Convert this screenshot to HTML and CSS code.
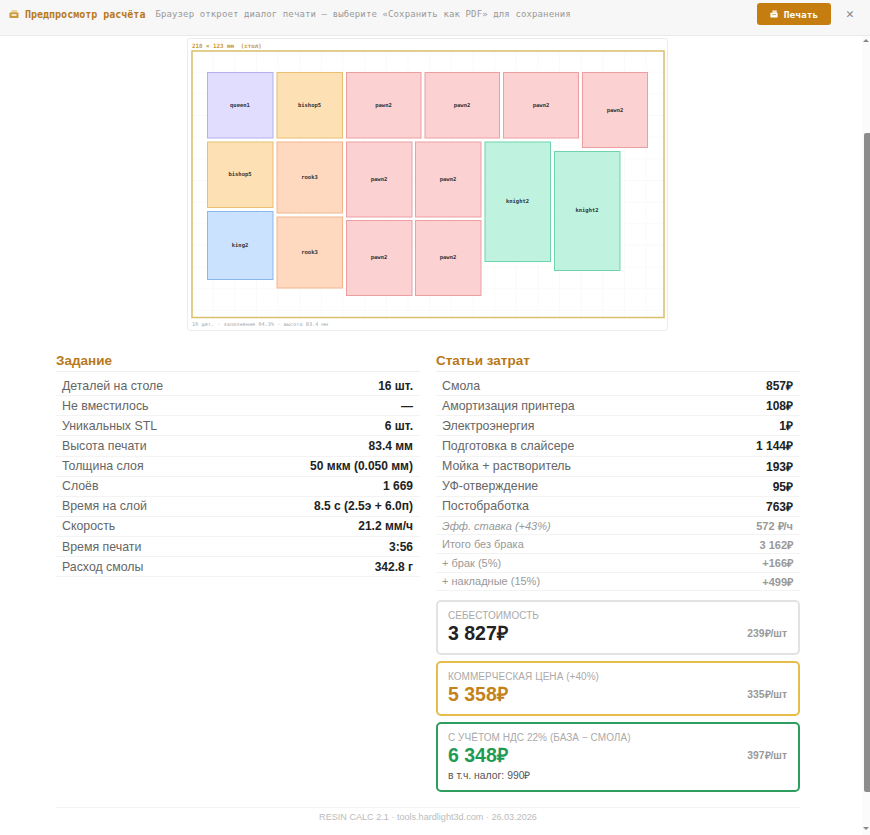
FILE: index.html
```html
<!DOCTYPE html>
<html lang="ru">
<head>
    <meta charset="UTF-8">
    <title>Предпросмотр расчёта</title>
    <link rel="stylesheet" href="styles.css">
</head>
<body>
    <div class="toolbar">
        <svg class="toolbar-icon" viewBox="0 0 10 10"><rect x="2.5" y="1" width="5.5" height="3" fill="#e8d3a0"/><rect x="0.5" y="3.5" width="9" height="5.5" fill="#c8993f"/><rect x="2.5" y="5" width="5" height="2" fill="#f3e4c2"/></svg>
        <span class="toolbar-title">Предпросмотр расчёта</span>
        <span class="toolbar-hint">Браузер откроет диалог печати — выберите «Сохранить как PDF» для сохранения</span>
        <button class="print-btn">
            <svg class="print-icon" viewBox="0 0 10 10"><rect x="3" y="0.5" width="5.5" height="3.5" fill="#f6e6cc"/><rect x="0.5" y="3.5" width="9" height="6" rx="0.5" fill="#ffffff"/><rect x="2.5" y="5" width="5" height="1.4" fill="#e0b070"/></svg>
            Печать
        </button>
        <span class="close-btn">✕</span>
    </div>

    <div class="viewport">
        <div class="page">
            <div class="sheet">
                <div class="sheet-cap">218 × 123 мм &nbsp;(стол)</div>
                <svg class="bed" viewBox="191 50 474 269">
                    <defs>
                        <pattern id="grid" x="192" y="51" width="21.65" height="21.65" patternUnits="userSpaceOnUse">
                            <path d="M21.65 0V21.65H0" fill="none" stroke="#f1f1ec" stroke-width="0.7"/>
                        </pattern>
                    </defs>
                    <rect class="bed-frame" x="192" y="51" width="472" height="266.5"/>
                    <g class="part part-queen"><rect x="207.5" y="72.5" width="65.5" height="65.5"/><text x="240" y="107">queen1</text></g>
                    <g class="part part-bishop"><rect x="277" y="72.5" width="65.5" height="65.5"/><text x="309.5" y="107">bishop5</text></g>
                    <g class="part part-pawn"><rect x="346.5" y="72.5" width="74.5" height="65.5"/><text x="383.5" y="107">pawn2</text></g>
                    <g class="part part-pawn"><rect x="425" y="72.5" width="74.5" height="65.5"/><text x="462" y="107">pawn2</text></g>
                    <g class="part part-pawn"><rect x="503.5" y="72.5" width="75" height="65.5"/><text x="541" y="107">pawn2</text></g>
                    <g class="part part-pawn"><rect x="582.5" y="72.5" width="65" height="75"/><text x="615" y="112">pawn2</text></g>
                    <g class="part part-bishop"><rect x="207.5" y="142" width="65.5" height="65.5"/><text x="240" y="176">bishop5</text></g>
                    <g class="part part-rook"><rect x="277" y="142" width="65.5" height="71"/><text x="309.5" y="179">rook3</text></g>
                    <g class="part part-pawn"><rect x="346.5" y="142" width="65.5" height="75"/><text x="379" y="181">pawn2</text></g>
                    <g class="part part-pawn"><rect x="415.5" y="142" width="65.5" height="75"/><text x="448" y="181">pawn2</text></g>
                    <g class="part part-knight"><rect x="485" y="142" width="65.5" height="119.5"/><text x="517.5" y="203">knight2</text></g>
                    <g class="part part-knight"><rect x="554.5" y="151.5" width="65.5" height="119"/><text x="587" y="212">knight2</text></g>
                    <g class="part part-king"><rect x="207.5" y="211.5" width="65.5" height="68"/><text x="240" y="247">king2</text></g>
                    <g class="part part-rook"><rect x="277" y="217" width="65.5" height="71"/><text x="309.5" y="254">rook3</text></g>
                    <g class="part part-pawn"><rect x="346.5" y="220.5" width="65.5" height="75"/><text x="379" y="259">pawn2</text></g>
                    <g class="part part-pawn"><rect x="415.5" y="220.5" width="65.5" height="75"/><text x="448" y="259">pawn2</text></g>
                </svg>
                <div class="sheet-foot">16 дет. · заполнение 64.3% · высота 83.4 мм</div>
            </div>

            <div class="columns">
                <section>
                    <h2>Задание</h2>
                    <div class="row"><span>Деталей на столе</span><b>16 шт.</b></div>
                    <div class="row"><span>Не вместилось</span><b>—</b></div>
                    <div class="row"><span>Уникальных STL</span><b>6 шт.</b></div>
                    <div class="row"><span>Высота печати</span><b>83.4 мм</b></div>
                    <div class="row"><span>Толщина слоя</span><b>50 мкм (0.050 мм)</b></div>
                    <div class="row"><span>Слоёв</span><b>1 669</b></div>
                    <div class="row"><span>Время на слой</span><b>8.5 с (2.5э + 6.0п)</b></div>
                    <div class="row"><span>Скорость</span><b>21.2 мм/ч</b></div>
                    <div class="row"><span>Время печати</span><b>3:56</b></div>
                    <div class="row"><span>Расход смолы</span><b>342.8 г</b></div>
                </section>
                <section>
                    <h2>Статьи затрат</h2>
                    <div class="row"><span>Смола</span><b>857₽</b></div>
                    <div class="row"><span>Амортизация принтера</span><b>108₽</b></div>
                    <div class="row"><span>Электроэнергия</span><b>1₽</b></div>
                    <div class="row"><span>Подготовка в слайсере</span><b>1 144₽</b></div>
                    <div class="row"><span>Мойка + растворитель</span><b>193₽</b></div>
                    <div class="row"><span>УФ-отверждение</span><b>95₽</b></div>
                    <div class="row"><span>Постобработка</span><b>763₽</b></div>
                    <div class="row row-sub row-rate"><span>Эфф. ставка (+43%)</span><b>572 ₽/ч</b></div>
                    <div class="row row-sub"><span>Итого без брака</span><b>3 162₽</b></div>
                    <div class="row row-sub"><span>+ брак (5%)</span><b>+166₽</b></div>
                    <div class="row row-sub"><span>+ накладные (15%)</span><b>+499₽</b></div>

                    <div class="totals">
                        <div class="total">
                            <div class="total-label">Себестоимость</div>
                            <div class="total-main">
                                <div class="total-value">3 827₽</div>
                                <div class="total-unit">239₽/шт</div>
                            </div>
                        </div>
                        <div class="total total-gold">
                            <div class="total-label">Коммерческая цена (+40%)</div>
                            <div class="total-main">
                                <div class="total-value">5 358₽</div>
                                <div class="total-unit">335₽/шт</div>
                            </div>
                        </div>
                        <div class="total total-green">
                            <div class="total-label">С учётом НДС 22% (база − смола)</div>
                            <div class="total-main">
                                <div class="total-value">6 348₽</div>
                                <div class="total-unit">397₽/шт</div>
                            </div>
                            <div class="total-note">в т.ч. налог: 990₽</div>
                        </div>
                    </div>
                </section>
            </div>

            <div class="footer">RESIN CALC 2.1 · tools.hardlight3d.com · 26.03.2026</div>
        </div>

        <div class="scrollbar">
            <div class="arrow-up"></div>
            <div class="thumb"></div>
            <div class="arrow-down"></div>
        </div>
    </div>
</body>
</html>
```

FILE: styles.css
```css
* {
    margin: 0;
    padding: 0;
    box-sizing: border-box;
}
html, body {
    height: 835px;
    overflow: hidden;
}
body {
    font-family: 'Liberation Sans', Arial, sans-serif;
    background-color: #ffffff;
    color: #222222;
    display: flex;
    flex-direction: column;
}

/* top bar */
.toolbar {
    flex: none;
    height: 36px;
    padding: 0 15px 7px 9px;
    display: flex;
    align-items: center;
    background-color: #f7f7f7;
    border-bottom: 1px solid #eaeaea;
    font-family: 'DejaVu Sans Mono', monospace;
}
.toolbar-icon {
    width: 10px;
    height: 10px;
    margin-right: 6px;
}
.toolbar-title {
    font-size: 10px;
    font-weight: 700;
    color: #b8791a;
    margin-right: 10px;
}
.toolbar-hint {
    font-size: 9px;
    letter-spacing: 0.12px;
    color: #999999;
}
.print-btn {
    margin-left: auto;
    width: 74px;
    height: 22px;
    display: flex;
    align-items: center;
    justify-content: center;
    gap: 6px;
    background-color: #c47d0e;
    color: #ffffff;
    border: none;
    border-radius: 3px;
    font-family: inherit;
    font-size: 9.5px;
    font-weight: 700;
}
.print-icon {
    width: 8px;
    height: 8px;
}
.close-btn {
    width: 10px;
    margin-left: 14px;
    font-size: 13px;
    line-height: 14px;
    text-align: center;
    color: #888888;
}

/* scrolling area */
.viewport {
    flex: 1;
    display: flex;
    min-height: 0;
}
.page {
    flex: 1;
    padding: 2px 62px 0 56px;
}
.scrollbar {
    flex: none;
    width: 8px;
    display: flex;
    flex-direction: column;
    align-items: center;
    background-color: #fbfbfb;
}
.arrow-up, .arrow-down {
    width: 0;
    height: 0;
    border-left: 3px solid transparent;
    border-right: 3px solid transparent;
}
.arrow-up {
    margin-top: 3px;
    border-bottom: 3px solid #888888;
}
.arrow-down {
    border-top: 3px solid #888888;
}
.thumb {
    width: 6px;
    height: 659px;
    margin: 91px 0 35px;
    margin-left: 2px;
    background-color: #8c8c8c;
    border-radius: 2px 0 0 2px;
}

/* nesting sheet */
.sheet {
    width: 481px;
    height: 293px;
    margin: 0 0 0 131px;
    padding: 3px 3px 0;
    background-color: #ffffff;
    border: 1px solid #ececec;
    border-radius: 3px;
    font-family: 'DejaVu Sans Mono', monospace;
}
.sheet-cap {
    height: 8px;
    padding-left: 1px;
    font-size: 5.8px;
    line-height: 8px;
    font-weight: 700;
    color: #c9963c;
}
.bed {
    display: block;
    width: 474px;
    height: 269px;
    margin-top: 0;
}
.bed-frame {
    fill: url(#grid);
    stroke: #d8bf6a;
    stroke-width: 1.5;
}
.part rect {
    stroke-width: 1;
    fill-opacity: 0.9;
}
.part text {
    font-family: 'DejaVu Sans Mono', monospace;
    font-size: 5.5px;
    font-weight: 700;
    text-anchor: middle;
    fill: #333333;
}
.part-pawn rect { fill: #fccccc; stroke: #ec9ea3; }
.part-queen rect { fill: #ddd9fe; stroke: #b5aeee; }
.part-bishop rect { fill: #fdddac; stroke: #e8c070; }
.part-rook rect { fill: #fed5b8; stroke: #f2b68c; }
.part-king rect { fill: #c5dffe; stroke: #8ab6ec; }
.part-knight rect { fill: #b8f1dc; stroke: #6fd3ad; }
.sheet-foot {
    padding: 2px 0 0 1px;
    font-size: 5.25px;
    color: #aaaaaa;
}

/* two columns */
.columns {
    display: grid;
    grid-template-columns: 364px 364px;
    gap: 16px;
    margin-top: 22px;
}
h2 {
    font-size: 13.5px;
    line-height: 15px;
    font-weight: 700;
    color: #b8791a;
    padding-bottom: 3px;
    margin-bottom: 4px;
    border-bottom: 1px solid #eeeeee;
}
.row {
    height: 20.13px;
    padding: 0 7px 0 6px;
    display: flex;
    align-items: center;
    justify-content: space-between;
    font-size: 12.35px;
    color: #666666;
    border-bottom: 1px solid #f3f3f3;
}
.row b {
    color: #222222;
    font-size: 12px;
}
.row-sub {
    height: 18.6px;
    font-size: 11px;
    color: #999999;
}
.row-sub b {
    font-size: 11px;
    color: #999999;
}
.row-rate span {
    font-style: italic;
}

/* totals */
.totals {
    margin-top: 9px;
    display: flex;
    flex-direction: column;
    gap: 6.5px;
}
.total {
    padding: 8px 11px 7.5px 10px;
    border: 2px solid #e2e2e2;
    border-radius: 5px;
}
.total-gold {
    border-color: #e6bd4a;
}
.total-green {
    border-color: #2e9e5e;
}
.total-label {
    font-size: 10px;
    line-height: 12px;
    letter-spacing: 0.05px;
    text-transform: uppercase;
    color: #aaaaaa;
}
.total-main {
    padding-bottom: 1px;
    display: flex;
    align-items: center;
    justify-content: space-between;
}
.total-value {
    font-size: 19.5px;
    line-height: 22px;
    font-weight: 700;
    color: #222222;
}
.total-gold .total-value {
    color: #c4821a;
}
.total-green .total-value {
    color: #1f9a55;
}
.total-note {
    margin-top: 3px;
    font-size: 10.4px;
    line-height: 12px;
    color: #555555;
}
.total-unit {
    font-size: 10.3px;
    font-weight: 700;
    color: #999999;
}

.footer {
    margin-top: 15px;
    padding-top: 4px;
    border-top: 1px solid #f3f3f3;
    text-align: center;
    font-size: 9.1px;
    color: #bbbbbb;
}
```
